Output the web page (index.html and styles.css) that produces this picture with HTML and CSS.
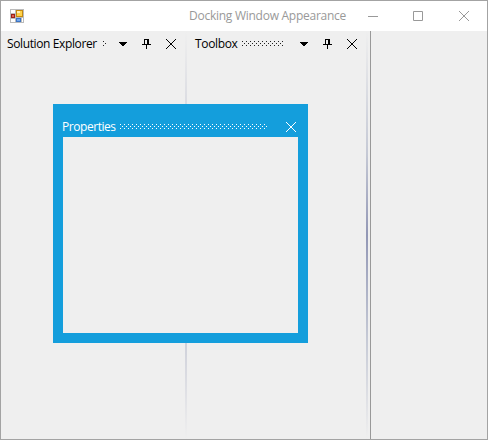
FILE: index.html
```html
<!DOCTYPE html>
<html lang="en">
<head>
<meta charset="utf-8">
<title>Docking Window Appearance</title>
<link rel="stylesheet" href="styles.css">
</head>
<body>
<svg class="defs" width="0" height="0" aria-hidden="true">
  <symbol id="arrow" viewBox="0 0 16 16"><path d="M4 6h8v1h-1v1h-1v1H9v1H7V9H6V8H5V7H4z"/></symbol>
  <symbol id="pin" viewBox="0 0 16 16"><path fill-rule="evenodd" d="M5 3h5v5h2v1H8v4H7V9H3V8h2zM6 4v4h2V4z"/></symbol>
  <symbol id="close" viewBox="0 0 16 16"><path d="M3 3L13 13M13 3L3 13" fill="none" stroke="currentColor"/></symbol>
  <pattern id="dots" width="4" height="4" patternUnits="userSpaceOnUse"><path d="M0 0h1v1h-1zM2 2h1v1h-1z" fill="#222"/></pattern>
  <pattern id="dots-light" width="4" height="4" patternUnits="userSpaceOnUse"><path d="M0 0h1v1h-1zM2 2h1v1h-1z" fill="#fff"/></pattern>
</svg>
<div class="window">
  <header class="titlebar">
    <svg class="app-icon" width="14" height="14" shape-rendering="crispEdges">
      <path d="M0 0h14v14H0z" fill="#bbb"/><path d="M1 1h4v3H1zM1 10h4v3H1zM12 9h1v4h-1z" fill="#fff"/>
      <path d="M6 1h7v7H6z" fill="#c58a10"/><path d="M7 2h5v5H7z" fill="#ffd24a"/><path d="M7 2h3v2H7z" fill="#ffeeb0"/>
      <path d="M1 5h4v4H1z" fill="#9c2119"/><path d="M2 6h2v2H2z" fill="#e0604f"/>
      <path d="M6 9h5v4H6z" fill="#3c74c4"/><path d="M7 10h3v2H7z" fill="#73a8ee"/>
    </svg>
    <h1 class="title">Docking Window Appearance</h1>
    <svg class="controls" width="104" height="14">
      <path d="M0 7.5h10M45.500 2.500h9v9h-9zM91 2l10 10M101 2L91 12" fill="none" stroke="#999"/>
    </svg>
  </header>
  <main class="workspace">
    <section class="panel solution">
      <div class="caption"><span class="name explorer">Solution Explorer</span>
        <svg class="grip" height="6"><rect width="3" height="5" fill="url(#dots)"/></svg>
        <div class="tools"><svg><use href="#arrow"/></svg><svg><use href="#pin"/></svg><svg><use href="#close"/></svg></div>
      </div>
    </section>
    <div class="splitter"></div>
    <section class="panel toolbox">
      <div class="caption"><span class="name tool">Toolbox</span>
        <svg class="grip" height="6"><rect width="42" height="5" fill="url(#dots)"/></svg>
        <div class="tools"><svg><use href="#arrow"/></svg><svg><use href="#pin"/></svg><svg><use href="#close"/></svg></div>
      </div>
    </section>
    <div class="splitter strong"></div>
    <div class="client"></div>
  </main>
  <section class="floating">
    <div class="float-caption"><span class="name props">Properties</span>
      <svg class="grip" height="5"><rect width="147" height="5" fill="url(#dots-light)"/></svg>
      <svg class="float-close"><use href="#close"/></svg>
    </div>
    <div class="float-body"></div>
  </section>
</div>
</body>
</html>
```
FILE: styles.css
```css
* { box-sizing: border-box; }
body { margin: 0; font: 12px/16px "Open Sans", "Noto Sans", sans-serif; }
svg { display: block; flex: none; }
.defs { position: absolute; }
.window { position: relative; width: 488px; height: 440px; border: 1px solid #a3a3a3; background: #efefef; }
.titlebar { display: flex; align-items: center; height: 30px; padding: 0 18px 0 9px; background: #fff; }
.title { flex: none; width: 179px; margin: 0 0 0 165px; font-size: 12px; font-weight: 400; color: #999; white-space: nowrap; letter-spacing: -.26px; }
.controls { overflow: visible; }
.workspace { display: flex; height: 408px; }
.panel.solution { width: 184px; }
.panel.toolbox { width: 179px; }
.caption { display: flex; align-items: center; height: 26px; padding: 0 6px; color: #000; }
.name { flex: none; white-space: nowrap; }
.explorer { width: 96px; letter-spacing: -.38px; }
.tool { width: 47px; letter-spacing: -.35px; }
.toolbox .caption { padding-left: 8px; }
.grip { flex: 1; min-width: 0; width: 0; }
.tools { display: flex; gap: 8px; }
.tools svg { width: 16px; height: 16px; }
.splitter { width: 2px; background: linear-gradient(#efefef, #cdcfd9 30%, #c5c8d5 50%, #cdcfd9 75%, #efefef); }
.splitter.strong { background: linear-gradient(#efefef, #c5c9d5 30%, #9297b5 50%, #c5c9d5 75%, #efefef); }
.client { flex: 1; margin-left: 2px; border-left: 1px solid #999; }
.floating { position: absolute; left: 52px; top: 103px; width: 255px; height: 239px; padding: 10px; background: #149edc; color: #fff; }
.float-caption { display: flex; align-items: center; height: 23px; }
.props { width: 58px; margin-left: -1px; padding-top: 2px; letter-spacing: -.45px; }
.float-caption .grip { margin-top: 2px; }
.float-close { width: 16px; height: 16px; margin: 3px -1px 0 0; }
.float-body { height: 196px; background: #efefef; }
```
